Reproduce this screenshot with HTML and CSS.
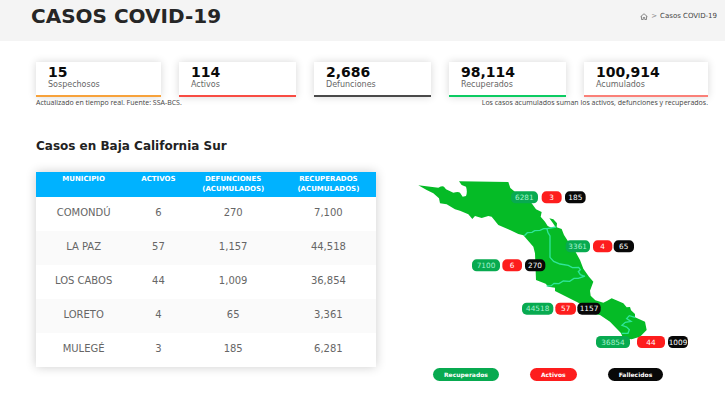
FILE: index.html
```html
<!DOCTYPE html>
<html lang="es">
<head>
<meta charset="utf-8">
<meta name="viewport" content="width=device-width, initial-scale=1">
<title>Casos COVID-19</title>
<link rel="stylesheet" href="styles.css">
</head>
<body>
<header class="page-header">
  <h1>CASOS COVID-19</h1>
  <nav class="breadcrumb" aria-label="Ruta">
    <a href="#" aria-label="Inicio"><svg class="home" viewBox="0 0 16 14"><path d="M1 7.500 8 1.500l7 6M3 6.500V13h3.500V9h3v4H13V6.500"/></svg></a>
    <span class="sep">&gt;</span>
    <span>Casos COVID-19</span>
  </nav>
</header>
<main class="content">
  <section class="cards">
    <div class="card suspect"><strong>15</strong><span>Sospechosos</span></div>
    <div class="card active"><strong>114</strong><span>Activos</span></div>
    <div class="card deaths"><strong>2,686</strong><span>Defunciones</span></div>
    <div class="card recovered"><strong>98,114</strong><span>Recuperados</span></div>
    <div class="card total"><strong>100,914</strong><span>Acumulados</span></div>
  </section>
  <div class="notes">
    <p>Actualizado en tiempo real. Fuente: SSA-BCS.</p>
    <p>Los casos acumulados suman los activos, defunciones y recuperados.</p>
  </div>
  <h2>Casos en Baja California Sur</h2>
  <section class="detail">
    <table class="cases">
      <thead>
        <tr><th class="wide">MUNICIPIO</th><th class="narrow">ACTIVOS</th><th class="wide">DEFUNCIONES (ACUMULADOS)</th><th class="wide">RECUPERADOS (ACUMULADOS)</th></tr>
      </thead>
      <tbody>
        <tr><td>COMONDÚ</td><td>6</td><td>270</td><td>7,100</td></tr>
        <tr><td>LA PAZ</td><td>57</td><td>1,157</td><td>44,518</td></tr>
        <tr><td>LOS CABOS</td><td>44</td><td>1,009</td><td>36,854</td></tr>
        <tr><td>LORETO</td><td>4</td><td>65</td><td>3,361</td></tr>
        <tr><td>MULEGÉ</td><td>3</td><td>185</td><td>6,281</td></tr>
      </tbody>
    </table>
    <div class="map-panel">
      <svg class="map" viewBox="0 6 894 552" role="img" aria-label="Mapa de Baja California Sur">
        <path class="land" d="M25 46 85 53Q97 47 102 50L108 58 130 68Q145 64 150 68L158 80 168 78Q173 65 168 50L155 45 147 34 295 36 301 54 320 70 345 90 365 100 378 118 395 126 392 140 405 155 413 168 426 174 436 170 428 158 418 145 430 148 441 160 440 172 455 177 462 195 475 215 489 232 510 270 520 296 537 320 550 335 540 362 542 377 556 391 580 398 592 392 605 385 640 400 650 412 660 411 663 421 675 432 675 442 705 455 710 480 690 500 665 508 640 505 632 488 600 455 570 435 550 432 505 398 435 363 435 353 415 350 407 341 378 330 375 250 370 230 340 196 325 192 300 180 265 165 245 140 235 138 215 144 195 138 187 147 175 133 150 122 135 118 110 103 90 100 87 85 70 70 50 60Z"/>
        <path class="border" d="M343 197 352 188 366 187 374 182 390 181 401 176 412 176 438 171M411 177 414 188 420 198 420 262 431 274 450 282 475 286 487 293 506 292 511 299 505 305 511 314 524 319M410 348 424 347 432 340 447 341 460 333 479 334 492 325 505 325 525 318M675 442 658 437 650 446 663 454 646 457 636 466 650 471 658 479 654 490 635 490"/>
        <g class="pill green"><rect x="303" y="64" width="81" height="36" rx="14"/><rect x="186" y="268" width="84" height="36" rx="14"/><rect x="467" y="211" width="73" height="36" rx="14"/><rect x="336" y="398" width="94" height="36" rx="14"/><rect x="558" y="498" width="102" height="36" rx="14"/></g>
        <g class="pill red"><rect x="395" y="64" width="60" height="36" rx="14"/><rect x="277" y="268" width="59" height="36" rx="14"/><rect x="549" y="211" width="58" height="36" rx="14"/><rect x="436" y="398" width="62" height="36" rx="14"/><rect x="681" y="498" width="84" height="36" rx="14"/></g>
        <g class="pill black"><rect x="465" y="64" width="62" height="36" rx="14"/><rect x="345" y="268" width="61" height="36" rx="14"/><rect x="611" y="211" width="61" height="36" rx="14"/><rect x="502" y="398" width="70" height="36" rx="14"/><rect x="774" y="498" width="60" height="36" rx="14"/></g>
        <g class="counts soft"><text x="343" y="90">6281</text><text x="228" y="294">7100</text><text x="503" y="237">3361</text><text x="383" y="424">44518</text><text x="609" y="524">36854</text></g>
        <g class="counts"><text x="425" y="90">3</text><text x="306" y="294">6</text><text x="578" y="237">4</text><text x="467" y="424">57</text><text x="723" y="524">44</text></g>
        <g class="counts"><text x="496" y="90">185</text><text x="375" y="294">270</text><text x="641" y="237">65</text><text x="537" y="424">1157</text><text x="804" y="524">1009</text></g>
      </svg>
      <div class="legend">
        <span class="tag green">Recuperados</span>
        <span class="tag red">Activos</span>
        <span class="tag black">Fallecidos</span>
      </div>
    </div>
  </section>
</main>
</body>
</html>
```
FILE: styles.css
```css
* { box-sizing: border-box; }

body {
  margin: 0;
  background: #fff;
  color: #222;
  font-family: "DejaVu Sans", sans-serif;
}

h1, h2, p { margin: 0; }

.page-header {
  display: flex;
  align-items: center;
  justify-content: space-between;
  padding: 4px 8px 13px 31px;
  background: #f4f4f4;
}

h1 {
  font-size: 20px;
  line-height: 24px;
  color: #262626;
}

.breadcrumb {
  display: flex;
  align-items: center;
  gap: 3px;
  font-size: 7px;
  line-height: 8px;
  color: #444;
}

.breadcrumb a { display: flex; }
.sep { color: #888; }

.home {
  width: 8px;
  height: 7px;
  fill: none;
  stroke: #666;
  stroke-width: 1.5;
}

.content { padding: 21px 17px 24px 36px; }

.cards {
  display: grid;
  grid-template-columns: 125fr 117fr 117fr 117fr 124fr;
  gap: 18px;
}

.card {
  display: flex;
  flex-direction: column;
  padding: 3px 12px 5px;
  border-bottom: 2px solid;
  background: #fff;
  box-shadow: 0 0 8px rgba(0, 0, 0, 0.16);
}

.card strong {
  font-size: 14px;
  line-height: 15px;
  color: #0a0a0a;
}

.card span {
  font-size: 8px;
  line-height: 10px;
  color: #666;
}

.suspect { border-color: #f7a23b; }
.active { border-color: #f84c43; }
.deaths { border-color: #4a4a4a; }
.recovered { border-color: #0ccb62; }
.total { border-color: #fa8078; }

.notes {
  display: flex;
  justify-content: space-between;
  padding-top: 1px;
  font-family: "Open Sans", sans-serif;
  font-size: 7px;
  line-height: 10px;
  color: #444;
}

h2 {
  padding: 30px 0 18px;
  font-size: 12px;
  line-height: 16px;
}

.detail {
  display: grid;
  grid-template-columns: 340fr 298fr;
  gap: 34px;
  align-items: start;
}

.cases {
  width: 100%;
  table-layout: fixed;
  border-collapse: collapse;
  box-shadow: 0 0 10px rgba(0, 0, 0, 0.2);
  text-align: center;
}

.cases th {
  height: 25px;
  padding: 2px 10px 3px;
  background: #00b2ff;
  color: #fff;
  font-size: 7px;
  line-height: 10px;
  vertical-align: top;
}

.cases .wide { width: 28%; }
.cases .narrow { width: 16%; padding: 2px 0 3px; }

.cases td {
  height: 34px;
  padding: 0 0 2px;
  font-size: 10px;
  line-height: 14px;
  color: #666;
}

.cases tbody tr:nth-child(even) { background: #fafafa; }

.map {
  display: block;
  width: 100%;
}

.land { fill: #05bb26; }

.border {
  fill: none;
  stroke: #2fe59a;
  stroke-width: 4;
}

.pill.green { fill: #08aa50; }
.pill.red { fill: #fd1d1d; }
.pill.black { fill: #080808; }

.counts {
  fill: #fff;
  font-size: 22px;
  text-anchor: middle;
}

.counts.soft { fill: #a5f2cd; }

.legend {
  display: flex;
  gap: 31px;
  padding: 12px 23px 0;
}

.tag {
  padding: 0 11px;
  border-radius: 7px;
  color: #fff;
  font-size: 6px;
  font-weight: bold;
  line-height: 13px;
}

.tag.green { background: #08aa50; }
.tag.red { background: #fd1d1d; }
.tag.black { background: #080808; }
```
